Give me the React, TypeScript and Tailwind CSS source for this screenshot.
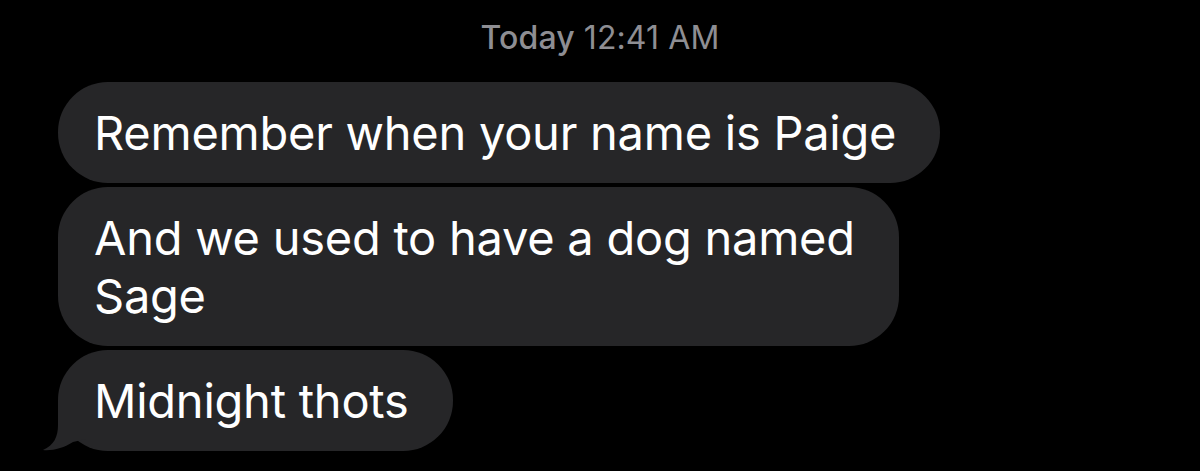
import React from "react";

const messages: string[][] = [
  ["Remember when your name is Paige"],
  ["And we used to have a dog named", "Sage"],
  ["Midnight thots"],
];

// Speech-bubble tail hanging off the bottom-left of the last bubble
function Tail() {
  return (
    <svg
      className="absolute left-[-16px] bottom-0"
      width="44"
      height="50"
      viewBox="0 0 44 50"
    >
      <path
        d="M16 0 L16 24 C16 36 12 44 1 49 C10 50 22 47 31 41 L44 38 L44 0 Z"
        fill="#262628"
      />
    </svg>
  );
}

export default function App() {
  return (
    <div
      className="w-[1200px] h-[471px] bg-black overflow-hidden"
      style={{ fontFamily: "Inter, 'Noto Sans', sans-serif" }}
    >
      <div className="flex justify-center pt-[20px] h-[82px]">
        <span className="text-[32px] leading-[36px] text-[#8e8e93] tracking-[0.1px]">
          <span className="font-medium">Today</span> 12:41 AM
        </span>
      </div>
      <div className="flex flex-col items-start gap-[4px] pl-[58px]">
        {messages.map((lines, i) => (
          <div
            key={i}
            className="relative bg-[#262628] rounded-[50px] pl-[36px] pr-[44px] py-[21.5px] text-white text-[47px] leading-[58px] tracking-[-0.25px] whitespace-nowrap"
          >
            {i === messages.length - 1 && <Tail />}
            <span className="relative block">
              {lines.map((l, j) => (
                <span key={j} className="block">
                  {l}
                </span>
              ))}
            </span>
          </div>
        ))}
      </div>
    </div>
  );
}
